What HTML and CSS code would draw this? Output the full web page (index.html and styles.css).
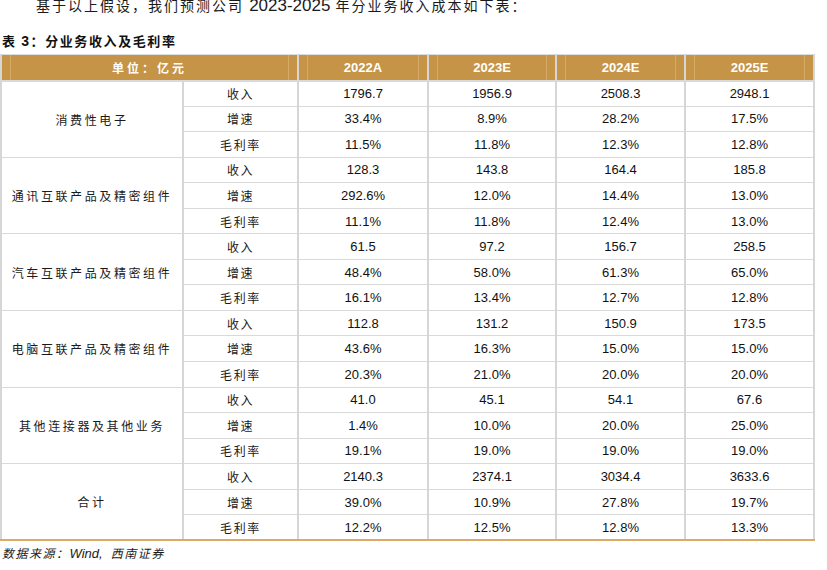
FILE: index.html
```html
<!DOCTYPE html>
<html lang="zh">
<head>
<meta charset="utf-8">
<link rel="stylesheet" href="styles.css">
</head>
<body>
<p class="intro">基于以上假设，我们预测公司 <span class="num">2023-2025</span> 年分业务收入成本如下表：</p>
<div class="caption">表 <span class="cap-num">3</span>：分业务收入及毛利率</div>
<table class="fin">
  <colgroup>
    <col class="c1"><col class="c2"><col class="c3"><col class="c4"><col class="c5"><col class="c6">
  </colgroup>
  <thead>
    <tr>
      <th colspan="2" class="unit">单位：亿元</th>
      <th>2022A</th><th>2023E</th><th>2024E</th><th>2025E</th>
    </tr>
  </thead>
  <tbody>
    <tr><td rowspan="3" class="seg">消费性电子</td><td class="lbl">收入</td><td>1796.7</td><td>1956.9</td><td>2508.3</td><td>2948.1</td></tr>
    <tr><td class="lbl">增速</td><td>33.4%</td><td>8.9%</td><td>28.2%</td><td>17.5%</td></tr>
    <tr><td class="lbl">毛利率</td><td>11.5%</td><td>11.8%</td><td>12.3%</td><td>12.8%</td></tr>

    <tr><td rowspan="3" class="seg">通讯互联产品及精密组件</td><td class="lbl">收入</td><td>128.3</td><td>143.8</td><td>164.4</td><td>185.8</td></tr>
    <tr><td class="lbl">增速</td><td>292.6%</td><td>12.0%</td><td>14.4%</td><td>13.0%</td></tr>
    <tr><td class="lbl">毛利率</td><td>11.1%</td><td>11.8%</td><td>12.4%</td><td>13.0%</td></tr>

    <tr><td rowspan="3" class="seg">汽车互联产品及精密组件</td><td class="lbl">收入</td><td>61.5</td><td>97.2</td><td>156.7</td><td>258.5</td></tr>
    <tr><td class="lbl">增速</td><td>48.4%</td><td>58.0%</td><td>61.3%</td><td>65.0%</td></tr>
    <tr><td class="lbl">毛利率</td><td>16.1%</td><td>13.4%</td><td>12.7%</td><td>12.8%</td></tr>

    <tr><td rowspan="3" class="seg">电脑互联产品及精密组件</td><td class="lbl">收入</td><td>112.8</td><td>131.2</td><td>150.9</td><td>173.5</td></tr>
    <tr><td class="lbl">增速</td><td>43.6%</td><td>16.3%</td><td>15.0%</td><td>15.0%</td></tr>
    <tr><td class="lbl">毛利率</td><td>20.3%</td><td>21.0%</td><td>20.0%</td><td>20.0%</td></tr>

    <tr><td rowspan="3" class="seg">其他连接器及其他业务</td><td class="lbl">收入</td><td>41.0</td><td>45.1</td><td>54.1</td><td>67.6</td></tr>
    <tr><td class="lbl">增速</td><td>1.4%</td><td>10.0%</td><td>20.0%</td><td>25.0%</td></tr>
    <tr><td class="lbl">毛利率</td><td>19.1%</td><td>19.0%</td><td>19.0%</td><td>19.0%</td></tr>

    <tr class="last-group"><td rowspan="3" class="seg">合计</td><td class="lbl">收入</td><td>2140.3</td><td>2374.1</td><td>3034.4</td><td>3633.6</td></tr>
    <tr><td class="lbl">增速</td><td>39.0%</td><td>10.9%</td><td>27.8%</td><td>19.7%</td></tr>
    <tr class="last"><td class="lbl">毛利率</td><td>12.2%</td><td>12.5%</td><td>12.8%</td><td>13.3%</td></tr>
  </tbody>
</table>
<div class="source">数据来源：<span class="src-en">Wind,</span> 西南证券</div>
</body>
</html>
```

FILE: styles.css
```css
html, body {
  margin: 0;
  padding: 0;
  background: #ffffff;
  overflow: hidden;
}

body {
  font-family: "Liberation Sans", "Noto Sans CJK SC", sans-serif;
  color: #111111;
}

.intro {
  margin: -4px 0 0 0;
  padding-left: 36px;
  height: 19px;
  line-height: 19px;
  font-family: "Noto Sans CJK SC", sans-serif;
  font-size: 14px;
  letter-spacing: 2px;
  color: #1a1a1a;
  white-space: nowrap;
}

.intro .num {
  font-family: "Liberation Sans", sans-serif;
  font-size: 17px;
  letter-spacing: 0;
}

.caption {
  margin-top: 16px;
  padding-left: 2px;
  height: 20px;
  line-height: 20px;
  font-family: "Noto Sans CJK SC", sans-serif;
  font-weight: 700;
  font-size: 13px;
  letter-spacing: 1.6px;
  color: #111111;
}

.caption .cap-num {
  font-family: "Liberation Sans", sans-serif;
  font-size: 14px;
}

.fin {
  margin-top: 3px;
  border-collapse: collapse;
  table-layout: fixed;
  width: 813px;
  font-size: 13px;
}

.c1 { width: 182px; }
.c2 { width: 115px; }
.c3 { width: 130px; }
.c4 { width: 128px; }
.c5 { width: 129px; }
.c6 { width: 129px; }

.fin th,
.fin td {
  padding: 0;
  text-align: center;
  vertical-align: middle;
  border-left: 2px solid #d6d6d6;
  border-right: 2px solid #d6d6d6;
  border-top: 1px solid #d9d9d9;
  border-bottom: 1px solid #d9d9d9;
  white-space: nowrap;
}

.fin thead tr {
  height: 26px;
}

.fin th {
  background: #c59447;
  color: #ffffff;
  font-weight: 700;
  font-size: 13px;
  border-top: 1px solid #dcdcdc;
  border-bottom: 2px solid #d9d9d9;
  box-shadow:
    inset 8px 0 0 #c59447,
    inset -8px 0 0 #c59447,
    inset 9px 0 0 #d6ab66,
    inset -9px 0 0 #d6ab66;
}

.fin th.unit {
  font-family: "Noto Sans CJK SC", sans-serif;
  font-size: 12px;
  letter-spacing: 3px;
}

.fin tbody tr {
  height: 25.56px;
}

.fin td.seg,
.fin td.lbl {
  font-family: "Noto Sans CJK SC", sans-serif;
  font-size: 12px;
  letter-spacing: 2.6px;
  color: #1a1a1a;
}

.fin td.lbl {
  letter-spacing: 1.6px;
}

.fin tr.last td,
.fin tr.last-group td.seg {
  border-bottom: 2px solid #dbaa69;
}

.source {
  margin-top: 2px;
  padding-left: 2px;
  height: 20px;
  line-height: 20px;
  font-family: "Noto Sans CJK SC", sans-serif;
  font-style: italic;
  font-size: 12px;
  letter-spacing: 1.5px;
  color: #1a1a1a;
}

.source .src-en {
  font-family: "Liberation Sans", sans-serif;
  font-size: 13px;
  letter-spacing: 0;
  margin-right: 4px;
}
```
